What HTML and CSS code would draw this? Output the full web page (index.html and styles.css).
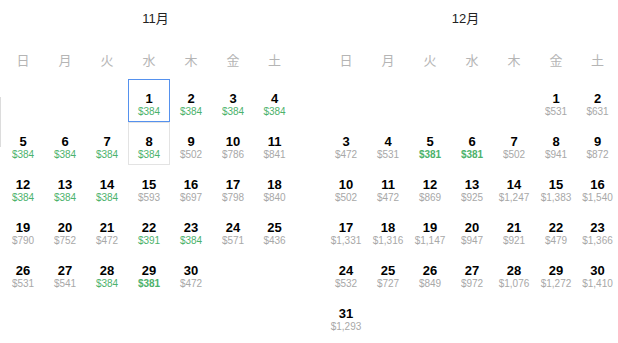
FILE: index.html
```html
<!DOCTYPE html>
<html lang="ja">
<head>
<meta charset="utf-8">
<link rel="stylesheet" href="styles.css">
</head>
<body>
<div class="edge"></div>
<div class="page">
  <section class="month">
    <div class="title title-left">11月</div>
    <div class="weekdays"><span>日</span><span>月</span><span>火</span><span>水</span><span>木</span><span>金</span><span>土</span></div>
    <div class="grid">
      <div class="cell empty"></div><div class="cell empty"></div><div class="cell empty"></div>
      <div class="cell sel"><b>1</b><i class="low">$384</i></div>
      <div class="cell"><b>2</b><i class="low">$384</i></div>
      <div class="cell"><b>3</b><i class="low">$384</i></div>
      <div class="cell"><b>4</b><i class="low">$384</i></div>
      <div class="cell"><b>5</b><i class="low">$384</i></div>
      <div class="cell"><b>6</b><i class="low">$384</i></div>
      <div class="cell"><b>7</b><i class="low">$384</i></div>
      <div class="cell hover"><b>8</b><i class="low">$384</i></div>
      <div class="cell"><b>9</b><i>$502</i></div>
      <div class="cell"><b>10</b><i>$786</i></div>
      <div class="cell"><b>11</b><i>$841</i></div>
      <div class="cell"><b>12</b><i class="low">$384</i></div>
      <div class="cell"><b>13</b><i class="low">$384</i></div>
      <div class="cell"><b>14</b><i class="low">$384</i></div>
      <div class="cell"><b>15</b><i>$593</i></div>
      <div class="cell"><b>16</b><i>$697</i></div>
      <div class="cell"><b>17</b><i>$798</i></div>
      <div class="cell"><b>18</b><i>$840</i></div>
      <div class="cell"><b>19</b><i>$790</i></div>
      <div class="cell"><b>20</b><i>$752</i></div>
      <div class="cell"><b>21</b><i>$472</i></div>
      <div class="cell"><b>22</b><i class="low">$391</i></div>
      <div class="cell"><b>23</b><i class="low">$384</i></div>
      <div class="cell"><b>24</b><i>$571</i></div>
      <div class="cell"><b>25</b><i>$436</i></div>
      <div class="cell"><b>26</b><i>$531</i></div>
      <div class="cell"><b>27</b><i>$541</i></div>
      <div class="cell"><b>28</b><i class="low">$384</i></div>
      <div class="cell"><b>29</b><i class="low best">$381</i></div>
      <div class="cell"><b>30</b><i>$472</i></div>
    </div>
  </section>
  <section class="month">
    <div class="title title-right">12月</div>
    <div class="weekdays"><span>日</span><span>月</span><span>火</span><span>水</span><span>木</span><span>金</span><span>土</span></div>
    <div class="grid">
      <div class="cell empty"></div><div class="cell empty"></div><div class="cell empty"></div><div class="cell empty"></div><div class="cell empty"></div>
      <div class="cell"><b>1</b><i>$531</i></div>
      <div class="cell"><b>2</b><i>$631</i></div>
      <div class="cell"><b>3</b><i>$472</i></div>
      <div class="cell"><b>4</b><i>$531</i></div>
      <div class="cell"><b>5</b><i class="low best">$381</i></div>
      <div class="cell"><b>6</b><i class="low best">$381</i></div>
      <div class="cell"><b>7</b><i>$502</i></div>
      <div class="cell"><b>8</b><i>$941</i></div>
      <div class="cell"><b>9</b><i>$872</i></div>
      <div class="cell"><b>10</b><i>$502</i></div>
      <div class="cell"><b>11</b><i>$472</i></div>
      <div class="cell"><b>12</b><i>$869</i></div>
      <div class="cell"><b>13</b><i>$925</i></div>
      <div class="cell"><b>14</b><i>$1,247</i></div>
      <div class="cell"><b>15</b><i>$1,383</i></div>
      <div class="cell"><b>16</b><i>$1,540</i></div>
      <div class="cell"><b>17</b><i>$1,331</i></div>
      <div class="cell"><b>18</b><i>$1,316</i></div>
      <div class="cell"><b>19</b><i>$1,147</i></div>
      <div class="cell"><b>20</b><i>$947</i></div>
      <div class="cell"><b>21</b><i>$921</i></div>
      <div class="cell"><b>22</b><i>$479</i></div>
      <div class="cell"><b>23</b><i>$1,366</i></div>
      <div class="cell"><b>24</b><i>$532</i></div>
      <div class="cell"><b>25</b><i>$727</i></div>
      <div class="cell"><b>26</b><i>$849</i></div>
      <div class="cell"><b>27</b><i>$972</i></div>
      <div class="cell"><b>28</b><i>$1,076</i></div>
      <div class="cell"><b>29</b><i>$1,272</i></div>
      <div class="cell"><b>30</b><i>$1,410</i></div>
      <div class="cell"><b>31</b><i>$1,293</i></div>
    </div>
  </section>
</div>
</body>
</html>
```

FILE: styles.css
```css
html, body {
  margin: 0;
  padding: 0;
  background: #fff;
}
body {
  width: 618px;
  height: 343px;
  position: relative;
  overflow: hidden;
  font-family: "Liberation Sans", Arial, "Noto Sans CJK JP", sans-serif;
}
.edge {
  position: absolute;
  left: 0;
  top: 97px;
  width: 1px;
  height: 50px;
  background: #dcdcdc;
}
.page {
  display: flex;
  gap: 30px;
  padding-left: 2px;
}
.month {
  width: 293px;
  flex: none;
}
.title {
  margin-top: 9px;
  height: 20px;
  line-height: 20px;
  font-size: 13px;
  color: #222;
  text-align: center;
}
.title-left { padding-left: 14px; }
.title-right { padding-right: 12px; }
.weekdays {
  margin-top: 21px;
  display: grid;
  grid-template-columns: repeat(6, 42px) 41px;
  height: 20px;
  line-height: 20px;
  font-family: "Noto Sans CJK JP", sans-serif;
  font-size: 13px;
  color: #b5b5b5;
  text-align: center;
}
.grid {
  margin-top: 9px;
  display: grid;
  grid-template-columns: repeat(6, 42px) 41px;
  grid-auto-rows: 43px;
}
.cell {
  box-sizing: border-box;
  padding-top: 12px;
  text-align: center;
}
.cell b {
  display: block;
  font-size: 13px;
  line-height: 15px;
  font-weight: bold;
  color: #000;
}
.cell i {
  display: block;
  font-style: normal;
  font-size: 10px;
  line-height: 12px;
  color: #a8a8a8;
  white-space: nowrap;
}
.cell i.low { color: #4cb26b; }
.cell i.best { font-weight: bold; }
.sel { box-shadow: inset 0 0 0 1px #5591ee; }
.hover { box-shadow: inset 0 0 0 1px #e3e3e3; }
```
